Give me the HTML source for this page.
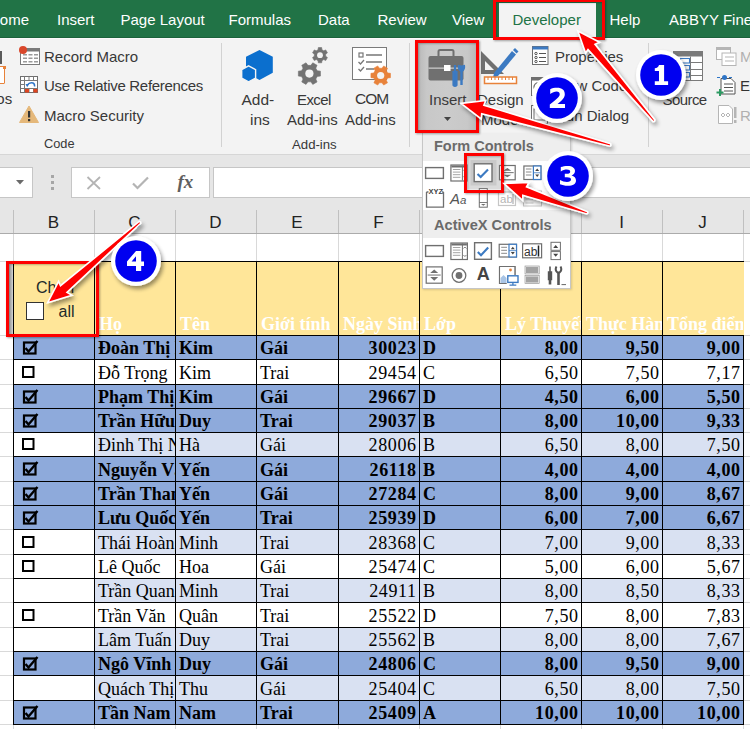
<!DOCTYPE html><html><head><meta charset="utf-8"><style>
html,body{margin:0;padding:0;width:750px;height:729px;overflow:hidden;background:#fff;position:relative}
.t{position:absolute;white-space:nowrap;line-height:1}
.b{position:absolute;box-sizing:border-box}
svg{position:absolute;overflow:visible}
</style></head><body>
<div class="b" style="left:0;top:0;width:750px;height:38px;background:#217346"></div>
<div class="t" style="left:-11.0px;top:11.6px;font-size:15px;color:#ffffff;font-weight:normal;font-family:'Liberation Sans', sans-serif;">Home</div>
<div class="t" style="left:57.0px;top:11.6px;font-size:15px;color:#ffffff;font-weight:normal;font-family:'Liberation Sans', sans-serif;">Insert</div>
<div class="t" style="left:120.5px;top:11.6px;font-size:15px;color:#ffffff;font-weight:normal;font-family:'Liberation Sans', sans-serif;">Page Layout</div>
<div class="t" style="left:228.5px;top:11.6px;font-size:15px;color:#ffffff;font-weight:normal;font-family:'Liberation Sans', sans-serif;">Formulas</div>
<div class="t" style="left:318.0px;top:11.6px;font-size:15px;color:#ffffff;font-weight:normal;font-family:'Liberation Sans', sans-serif;">Data</div>
<div class="t" style="left:377.5px;top:11.6px;font-size:15px;color:#ffffff;font-weight:normal;font-family:'Liberation Sans', sans-serif;">Review</div>
<div class="t" style="left:452.0px;top:11.6px;font-size:15px;color:#ffffff;font-weight:normal;font-family:'Liberation Sans', sans-serif;">View</div>
<div class="t" style="left:609.5px;top:11.6px;font-size:15px;color:#ffffff;font-weight:normal;font-family:'Liberation Sans', sans-serif;">Help</div>
<div class="t" style="left:669.0px;top:11.6px;font-size:15px;color:#ffffff;font-weight:normal;font-family:'Liberation Sans', sans-serif;">ABBYY FineReader</div>
<div class="b" style="left:0;top:37px;width:750px;height:1px;background:#1b623b"></div>
<div class="b" style="left:0;top:38px;width:750px;height:1px;background:#fafafa"></div>
<div class="b" style="left:499px;top:3px;width:97px;height:36px;background:#f3f3f3"></div>
<div class="t" style="left:512.5px;top:11.6px;font-size:15px;color:#217346;font-weight:normal;font-family:'Liberation Sans', sans-serif;">Developer</div>
<div class="b" style="left:0;top:39px;width:750px;height:116px;background:#f3f3f3;border-bottom:1px solid #d6d6d6"></div>
<div class="b" style="left:0;top:51px;width:1.6px;height:13px;background:#5a5a5a"></div>
<div class="b" style="left:-14px;top:66px;width:18.5px;height:17.5px;border:1.5px solid #e8823a;border-radius:1px;background:#fff"></div><div class="b" style="left:3px;top:66px;width:2.5px;height:2.5px;background:#e8823a"></div>
<div class="t" style="left:-3.7px;top:91.3px;font-size:15px;color:#383838;font-weight:normal;font-family:'Liberation Sans', sans-serif;">os</div>
<svg style="left:19px;top:46px" width="22" height="20" viewBox="0 0 22 20">
<rect x="1.5" y="2.5" width="19" height="16" fill="#fff" stroke="#7a7a7a"/>
<rect x="1.5" y="2.5" width="19" height="3" fill="#7a7a7a"/>
<g fill="#9a9a9a"><rect x="4" y="8" width="4" height="1.5"/><rect x="9.5" y="8" width="4" height="1.5"/><rect x="15" y="8" width="4" height="1.5"/>
<rect x="4" y="11.5" width="4" height="1.5"/><rect x="9.5" y="11.5" width="4" height="1.5"/><rect x="15" y="11.5" width="4" height="1.5"/>
<rect x="4" y="15" width="4" height="1.5"/><rect x="9.5" y="15" width="4" height="1.5"/><rect x="15" y="15" width="4" height="1.5"/></g>
<circle cx="4" cy="4" r="4" fill="#d9472b"/></svg>
<div class="t" style="left:44.0px;top:49.3px;font-size:15px;color:#383838;font-weight:normal;font-family:'Liberation Sans', sans-serif;">Record Macro</div>
<svg style="left:20px;top:76px" width="19" height="17" viewBox="0 0 19 17">
<rect x="0.5" y="0.5" width="17" height="16" fill="#fff" stroke="#6f6f6f"/>
<path d="M0.5 4.5H17.5M0.5 8.5H4.5M0.5 12.5H17.5M4.5 0.5V16.5M9 0.5V4.5M13.5 0.5V4.5M9 12.5V16.5M13.5 12.5V16.5" stroke="#7a7a7a" stroke-width="1"/>
<rect x="5" y="13" width="4" height="3.5" fill="#e0441f"/><rect x="13.5" y="13" width="4" height="3.5" fill="#e0441f"/>
<path d="M7 9.5 Q9.5 6 13 7 Q15 8 14.5 10.5" stroke="#2e75c7" stroke-width="1.5" fill="none"/><path d="M5.5 8 L8.8 8.2 L7.2 11.2 Z" fill="#2e75c7"/></svg>
<div class="t" style="left:44.0px;top:78.3px;font-size:15px;color:#383838;font-weight:normal;font-family:'Liberation Sans', sans-serif;letter-spacing:-0.3px">Use Relative References</div>
<svg style="left:19px;top:105px" width="20" height="18" viewBox="0 0 20 18">
<path d="M10 1 L19.5 17.5 L0.5 17.5 Z" fill="#e5b87a" stroke="#e5b87a" stroke-linejoin="round"/>
<rect x="9" y="6" width="2.2" height="6.5" fill="#333"/><rect x="9" y="14" width="2.2" height="2.2" fill="#333"/></svg>
<div class="t" style="left:44.0px;top:107.8px;font-size:15px;color:#383838;font-weight:normal;font-family:'Liberation Sans', sans-serif;">Macro Security</div>
<div class="t" style="left:44.0px;top:138.2px;font-size:12.8px;color:#383838;font-weight:normal;font-family:'Liberation Sans', sans-serif;">Code</div>
<div class="b" style="left:221px;top:43px;width:1px;height:104px;background:#d2d2d2"></div>
<svg style="left:0;top:0" width="300" height="100">
<path d="M259.5 49.9 L272.8 56.8 V72.8 L259.5 79.9 L246 72.8 V56.8 Z" fill="#0b6fce"/>
<path d="M248.6 65.8 L255.6 69.7 V78.1 L248.6 81.8 L241.7 78.1 V69.7 Z" fill="#0b6fce" stroke="#f3f3f3" stroke-width="1.4"/></svg>
<div class="t" style="left:241.5px;top:91.9px;font-size:15.5px;color:#383838;font-weight:normal;font-family:'Liberation Sans', sans-serif;">Add-</div>
<div class="t" style="left:250.0px;top:111.9px;font-size:15.5px;color:#383838;font-weight:normal;font-family:'Liberation Sans', sans-serif;">ins</div>
<svg style="left:0;top:0" width="750" height="160"><polygon points="317.27,70.77 320.43,71.13 320.43,76.07 317.27,76.43 315.79,79.00 317.05,81.92 312.78,84.38 310.88,81.83 307.92,81.83 306.02,84.38 301.75,81.92 303.01,79.00 301.53,76.43 298.37,76.07 298.37,71.13 301.53,70.77 303.01,68.20 301.75,65.28 306.02,62.82 307.92,65.37 310.88,65.37 312.78,62.82 317.05,65.28 315.79,68.20" fill="#737373" stroke="#737373" stroke-width="0.6" stroke-linejoin="round"/><circle cx="309.4" cy="73.6" r="4.1" fill="#f3f3f3"/><polygon points="325.68,56.22 327.44,57.53 325.74,60.48 323.73,59.61 321.96,60.63 321.70,62.81 318.30,62.81 318.04,60.63 316.27,59.61 314.26,60.48 312.56,57.53 314.32,56.22 314.32,54.18 312.56,52.87 314.26,49.92 316.27,50.79 318.04,49.77 318.30,47.59 321.70,47.59 321.96,49.77 323.73,50.79 325.74,49.92 327.44,52.87 325.68,54.18" fill="#737373" stroke="#737373" stroke-width="0.6" stroke-linejoin="round"/><circle cx="320" cy="55.2" r="2.9" fill="#f3f3f3"/></svg>
<div class="t" style="left:297.0px;top:92.3px;font-size:15px;color:#383838;font-weight:normal;font-family:'Liberation Sans', sans-serif;letter-spacing:-0.6px">Excel</div>
<div class="t" style="left:287.0px;top:112.3px;font-size:15px;color:#383838;font-weight:normal;font-family:'Liberation Sans', sans-serif;">Add-ins</div>
<svg style="left:352px;top:47px" width="40" height="40" viewBox="0 0 40 40">
<rect x="0.5" y="0.5" width="34" height="32" fill="#fff" stroke="#7a7a7a"/>
<rect x="7" y="6" width="4" height="4" fill="none" stroke="#777" stroke-width="1.2"/>
<path d="M14 8H30M14 15H30M14 22H22" stroke="#777" stroke-width="1.3"/>
<path d="M6.5 15 L8.5 17 L12 13 M6.5 22 L8.5 24 L12 20" stroke="#777" stroke-width="1.3" fill="none"/></svg>
<svg style="left:0;top:0" width="750" height="160"><polygon points="387.66,72.99 390.46,73.32 390.46,77.68 387.66,78.01 386.35,80.28 387.47,82.86 383.69,85.04 382.01,82.78 379.39,82.78 377.71,85.04 373.93,82.86 375.05,80.28 373.74,78.01 370.94,77.68 370.94,73.32 373.74,72.99 375.05,70.72 373.93,68.14 377.71,65.96 379.39,68.22 382.01,68.22 383.69,65.96 387.47,68.14 386.35,70.72" fill="#e8823a" stroke="#e8823a" stroke-width="0.6" stroke-linejoin="round"/><circle cx="380.7" cy="75.5" r="3.6" fill="#f3f3f3"/></svg>
<div class="t" style="left:355.0px;top:91.4px;font-size:15.5px;color:#383838;font-weight:normal;font-family:'Liberation Sans', sans-serif;letter-spacing:-1px">COM</div>
<div class="t" style="left:345.0px;top:112.3px;font-size:15px;color:#383838;font-weight:normal;font-family:'Liberation Sans', sans-serif;">Add-ins</div>
<div class="t" style="left:292.0px;top:137.8px;font-size:13.2px;color:#383838;font-weight:normal;font-family:'Liberation Sans', sans-serif;">Add-ins</div>
<div class="b" style="left:409px;top:43px;width:1px;height:104px;background:#d2d2d2"></div>
<div class="b" style="left:418px;top:43px;width:58px;height:88px;background:linear-gradient(90deg,#b9b9b9 0,#c8c8c8 15%,#cbcbcb 50%,#c8c8c8 85%,#b9b9b9 100%)"></div>
<svg style="left:428px;top:49px" width="40" height="38" viewBox="0 0 40 38">
<path d="M10.5 7 V2.5 Q10.5 1 12 1 H24 Q25.5 1 25.5 2.5 V7" fill="none" stroke="#6f6f6f" stroke-width="2"/>
<rect x="0.5" y="7" width="35" height="24.5" rx="2" fill="#707070"/>
<rect x="0.5" y="18.5" width="35" height="1.3" fill="#c9c9c9"/>
<rect x="16" y="16" width="6.5" height="6" fill="#fff"/>
<path d="M27 16 V23 M25.5 23 H28.5 V36 Q27 38 25.5 36 Z" stroke="#3c7ac2" stroke-width="2.2" fill="#3c7ac2"/>
<path d="M33 16.5 Q31.5 19 33.5 21 V36 M33.5 21 Q35.5 19 34 16.5" stroke="#3c7ac2" stroke-width="2.4" fill="none"/>
<path d="M31 16 Q30 21 33.5 22 Q37 21 36 16" stroke="#3c7ac2" stroke-width="2" fill="none"/></svg>
<div class="t" style="left:429.0px;top:91.5px;font-size:15px;color:#3a3a3a;font-weight:normal;font-family:'Liberation Sans', sans-serif;">Insert</div>
<svg style="left:444px;top:117px" width="8" height="5"><path d="M0 0H7L3.5 4Z" fill="#444"/></svg>
<svg style="left:480px;top:47px" width="40" height="38" viewBox="0 0 40 38">
<path d="M1 4 L24 27 H1 Z" fill="#6f6f6f"/><path d="M5 14 L14 23 H5 Z" fill="#f3f3f3"/>
<path d="M14 26 L32 4 L36 7.5 L18 29 L13 31 Z" fill="#3c7ac2"/><path d="M33 3 L35 1 L38.5 4.5 L36.5 6.5 Z" fill="#3c7ac2"/>
<rect x="4.5" y="30" width="32" height="6.5" fill="#fff" stroke="#e8823a" stroke-width="1.5"/>
<path d="M8 30v3M11.5 30v3M15 30v3M18.5 30v3M22 30v3M25.5 30v3M29 30v3M32.5 30v3" stroke="#e8823a" stroke-width="1"/></svg>
<div class="t" style="left:477.0px;top:91.7px;font-size:15px;color:#383838;font-weight:normal;font-family:'Liberation Sans', sans-serif;">Design</div>
<div class="t" style="left:481.0px;top:111.8px;font-size:15px;color:#383838;font-weight:normal;font-family:'Liberation Sans', sans-serif;">Mode</div>
<svg style="left:532px;top:46px" width="17" height="19" viewBox="0 0 17 19">
<rect x="0.5" y="0.5" width="15.5" height="18" fill="#fff" stroke="#6f6f6f"/><rect x="0.5" y="0.5" width="15.5" height="3" fill="#3c7ac2"/>
<circle cx="4" cy="7.5" r="1.2" fill="none" stroke="#555"/><circle cx="4" cy="11.5" r="1.2" fill="none" stroke="#555"/><circle cx="4" cy="15.5" r="1.2" fill="none" stroke="#555"/>
<path d="M7 7.5H14M7 11.5H14M7 15.5H14" stroke="#555" stroke-width="1.2"/></svg>
<div class="t" style="left:555.0px;top:49.3px;font-size:15px;color:#383838;font-weight:normal;font-family:'Liberation Sans', sans-serif;">Properties</div>
<svg style="left:531px;top:77px" width="18" height="19" viewBox="0 0 18 19">
<rect x="0.5" y="0.5" width="16" height="18" fill="#fff" stroke="#6f6f6f"/><rect x="0.5" y="0.5" width="16" height="3" fill="#6f6f6f"/>
<circle cx="7" cy="10" r="4" fill="none" stroke="#6f6f6f" stroke-width="1.3"/></svg>
<div class="t" style="left:555.0px;top:78.3px;font-size:15px;color:#383838;font-weight:normal;font-family:'Liberation Sans', sans-serif;">View Code</div>
<svg style="left:531px;top:105px" width="18" height="19" viewBox="0 0 18 19">
<rect x="0.5" y="0.5" width="16" height="18" fill="#fff" stroke="#6f6f6f"/><rect x="3" y="4" width="11" height="11" fill="none" stroke="#6f6f6f"/></svg>
<div class="t" style="left:555.0px;top:107.6px;font-size:15px;color:#383838;font-weight:normal;font-family:'Liberation Sans', sans-serif;">Run Dialog</div>
<div class="b" style="left:648px;top:43px;width:1px;height:104px;background:#d2d2d2"></div>
<svg style="left:672.5px;top:50.5px" width="31" height="31" viewBox="0 0 31 31">
<rect x="0.5" y="0.5" width="29" height="29" fill="#fff" stroke="#7a7a7a"/><rect x="0.5" y="0.5" width="29" height="5" fill="#7a7a7a"/>
<path d="M17.5 11.5H29.5M17.5 18.5H29.5M17.5 24.5H29.5M17.5 5.5V29.5" stroke="#7a7a7a" stroke-width="1"/>
<rect x="7.5" y="7.5" width="9" height="4.5" fill="none" stroke="#3c7ac2" stroke-width="1.1"/><rect x="7.5" y="14.5" width="9" height="4.5" fill="none" stroke="#3c7ac2" stroke-width="1.1"/><rect x="7.5" y="21.5" width="9" height="4.5" fill="none" stroke="#3c7ac2" stroke-width="1.1"/></svg>
<div class="t" style="left:662.6px;top:91.6px;font-size:15px;color:#383838;font-weight:normal;font-family:'Liberation Sans', sans-serif;letter-spacing:-0.6px">Source</div>
<svg style="left:716px;top:47px" width="21" height="19" viewBox="0 0 21 19">
<rect x="0.5" y="0.5" width="14" height="12" fill="#fff" stroke="#b5b5b5"/><rect x="0.5" y="0.5" width="14" height="2.5" fill="#b5b5b5"/>
<rect x="6" y="6" width="14" height="12.5" fill="#fff" stroke="#b5b5b5"/><path d="M9 10h9M9 14h9" stroke="#b5b5b5"/></svg>
<div class="t" style="left:740.0px;top:49.3px;font-size:15px;color:#b0b0b0;font-weight:normal;font-family:'Liberation Sans', sans-serif;">Map Properties</div>
<svg style="left:716px;top:75px" width="21" height="21" viewBox="0 0 21 21">
<path d="M5 3.5H15L19 7.5V19H5Z" fill="#fff" stroke="#555"/><path d="M8 9h9M8 12.5h9M8 16h9" stroke="#555"/>
<path d="M1 2.5h3M13 2.5h3" stroke="#2e75c7" stroke-width="1.2"/><circle cx="8.5" cy="2.5" r="2.5" fill="#2e75c7"/>
<path d="M4 14V21M0.5 17.5H7.5" stroke="#2c9a62" stroke-width="2"/></svg>
<div class="t" style="left:740.0px;top:78.3px;font-size:15px;color:#333;font-weight:normal;font-family:'Liberation Sans', sans-serif;">Expansion Packs</div>
<svg style="left:718px;top:105px" width="19" height="19" viewBox="0 0 19 19">
<path d="M0.5 0.5H11L14.5 4V18.5H0.5Z" fill="#fff" stroke="#b5b5b5"/><path d="M3 10 L5 8 L7 10 L5 12Z M8 10 L10 8 L12 10 L10 12Z" fill="none" stroke="#b5b5b5"/>
<rect x="16" y="2" width="2.5" height="11" fill="#b5b5b5"/><rect x="16" y="15" width="2.5" height="3" fill="#b5b5b5"/></svg>
<div class="t" style="left:740.0px;top:107.6px;font-size:15px;color:#b0b0b0;font-weight:normal;font-family:'Liberation Sans', sans-serif;">Refresh Data</div>
<div class="b" style="left:0;top:155px;width:750px;height:55px;background:#e6e6e6"></div>
<div class="b" style="left:-10px;top:167px;width:43px;height:31px;background:#fff;border:1px solid #c6c6c6"></div>
<svg style="left:16px;top:180px" width="9" height="5"><path d="M0 0H8L4 4.5Z" fill="#6a6a6a"/></svg>
<div class="b" style="left:51px;top:175px;width:3px;height:3px;background:#a6a6a6"></div>
<div class="b" style="left:51px;top:181px;width:3px;height:3px;background:#a6a6a6"></div>
<div class="b" style="left:51px;top:187px;width:3px;height:3px;background:#a6a6a6"></div>
<div class="b" style="left:71px;top:167px;width:139px;height:31px;background:#fff;border:1px solid #c6c6c6"></div>
<svg style="left:86px;top:176px" width="16" height="14"><path d="M1.5 1L14 13M14 1L1.5 13" stroke="#b4b4b4" stroke-width="1.8"/></svg>
<svg style="left:132px;top:176px" width="17" height="14"><path d="M1 7.5L5.5 12L16 1.5" stroke="#b4b4b4" stroke-width="2.2" fill="none"/></svg>
<div class="t" style="left:177.5px;top:171.6px;font-size:19px;color:#5f5f5f;font-weight:bold;font-family:'Liberation Serif', serif;"><i>fx</i></div>
<div class="b" style="left:213px;top:167px;width:550px;height:31px;background:#fff;border:1px solid #c6c6c6"></div>
<div class="b" style="left:0;top:210px;width:750px;height:24px;background:#e6e6e6;border-bottom:1px solid #ababab"></div>
<div class="b" style="left:13px;top:210px;width:1px;height:23px;background:#c0c0c0"></div>
<div class="b" style="left:94px;top:210px;width:1px;height:23px;background:#c0c0c0"></div>
<div class="b" style="left:175px;top:210px;width:1px;height:23px;background:#c0c0c0"></div>
<div class="b" style="left:256px;top:210px;width:1px;height:23px;background:#c0c0c0"></div>
<div class="b" style="left:338px;top:210px;width:1px;height:23px;background:#c0c0c0"></div>
<div class="b" style="left:419px;top:210px;width:1px;height:23px;background:#c0c0c0"></div>
<div class="b" style="left:500px;top:210px;width:1px;height:23px;background:#c0c0c0"></div>
<div class="b" style="left:581px;top:210px;width:1px;height:23px;background:#c0c0c0"></div>
<div class="b" style="left:662px;top:210px;width:1px;height:23px;background:#c0c0c0"></div>
<div class="b" style="left:743px;top:210px;width:1px;height:23px;background:#c0c0c0"></div>
<div class="t" style="left:13px;width:81px;text-align:center;top:213.6px;font-size:17px;color:#222;font-family:'Liberation Sans', sans-serif">B</div>
<div class="t" style="left:94px;width:81px;text-align:center;top:213.6px;font-size:17px;color:#222;font-family:'Liberation Sans', sans-serif">C</div>
<div class="t" style="left:175px;width:81px;text-align:center;top:213.6px;font-size:17px;color:#222;font-family:'Liberation Sans', sans-serif">D</div>
<div class="t" style="left:256px;width:82px;text-align:center;top:213.6px;font-size:17px;color:#222;font-family:'Liberation Sans', sans-serif">E</div>
<div class="t" style="left:338px;width:81px;text-align:center;top:213.6px;font-size:17px;color:#222;font-family:'Liberation Sans', sans-serif">F</div>
<div class="t" style="left:419px;width:81px;text-align:center;top:213.6px;font-size:17px;color:#222;font-family:'Liberation Sans', sans-serif">G</div>
<div class="t" style="left:500px;width:81px;text-align:center;top:213.6px;font-size:17px;color:#222;font-family:'Liberation Sans', sans-serif">H</div>
<div class="t" style="left:581px;width:81px;text-align:center;top:213.6px;font-size:17px;color:#222;font-family:'Liberation Sans', sans-serif">I</div>
<div class="t" style="left:662px;width:81px;text-align:center;top:213.6px;font-size:17px;color:#222;font-family:'Liberation Sans', sans-serif">J</div>
<div class="b" style="left:0;top:261px;width:750px;height:1px;background:#d9d9d9"></div>
<div class="b" style="left:0;top:335px;width:750px;height:1px;background:#d9d9d9"></div>
<div class="b" style="left:0;top:359px;width:750px;height:1px;background:#d9d9d9"></div>
<div class="b" style="left:0;top:384px;width:750px;height:1px;background:#d9d9d9"></div>
<div class="b" style="left:0;top:408px;width:750px;height:1px;background:#d9d9d9"></div>
<div class="b" style="left:0;top:432px;width:750px;height:1px;background:#d9d9d9"></div>
<div class="b" style="left:0;top:456px;width:750px;height:1px;background:#d9d9d9"></div>
<div class="b" style="left:0;top:481px;width:750px;height:1px;background:#d9d9d9"></div>
<div class="b" style="left:0;top:505px;width:750px;height:1px;background:#d9d9d9"></div>
<div class="b" style="left:0;top:529px;width:750px;height:1px;background:#d9d9d9"></div>
<div class="b" style="left:0;top:554px;width:750px;height:1px;background:#d9d9d9"></div>
<div class="b" style="left:0;top:578px;width:750px;height:1px;background:#d9d9d9"></div>
<div class="b" style="left:0;top:602px;width:750px;height:1px;background:#d9d9d9"></div>
<div class="b" style="left:0;top:627px;width:750px;height:1px;background:#d9d9d9"></div>
<div class="b" style="left:0;top:651px;width:750px;height:1px;background:#d9d9d9"></div>
<div class="b" style="left:0;top:675px;width:750px;height:1px;background:#d9d9d9"></div>
<div class="b" style="left:0;top:700px;width:750px;height:1px;background:#d9d9d9"></div>
<div class="b" style="left:0;top:724px;width:750px;height:1px;background:#d9d9d9"></div>
<div class="b" style="left:13px;top:234px;width:1px;height:495px;background:#d9d9d9"></div>
<div class="b" style="left:94px;top:234px;width:1px;height:495px;background:#d9d9d9"></div>
<div class="b" style="left:175px;top:234px;width:1px;height:495px;background:#d9d9d9"></div>
<div class="b" style="left:256px;top:234px;width:1px;height:495px;background:#d9d9d9"></div>
<div class="b" style="left:338px;top:234px;width:1px;height:495px;background:#d9d9d9"></div>
<div class="b" style="left:419px;top:234px;width:1px;height:495px;background:#d9d9d9"></div>
<div class="b" style="left:500px;top:234px;width:1px;height:495px;background:#d9d9d9"></div>
<div class="b" style="left:581px;top:234px;width:1px;height:495px;background:#d9d9d9"></div>
<div class="b" style="left:662px;top:234px;width:1px;height:495px;background:#d9d9d9"></div>
<div class="b" style="left:743px;top:234px;width:1px;height:495px;background:#d9d9d9"></div>
<div class="b" style="left:13px;top:261px;width:731px;height:74px;background:#ffe699"></div>
<div class="b" style="left:13px;top:335px;width:731px;height:24px;background:#8eaadb"></div>
<div class="t" style="left:95px;top:335px;width:80px;height:24px;overflow:hidden"><span class="t" style="left:3px;top:3.9px;font-size:18px;font-weight:bold;font-family:'Liberation Serif', serif;color:#000">Đoàn Thị Kim</span></div>
<div class="t" style="left:176px;top:335px;width:80px;height:24px;overflow:hidden"><span class="t" style="left:3px;top:3.9px;font-size:18px;font-weight:bold;font-family:'Liberation Serif', serif;color:#000">Kim</span></div>
<div class="t" style="left:257px;top:335px;width:81px;height:24px;overflow:hidden"><span class="t" style="left:3px;top:3.9px;font-size:18px;font-weight:bold;font-family:'Liberation Serif', serif;color:#000">Gái</span></div>
<div class="t" style="left:339px;top:335px;width:80px;height:24px;overflow:hidden"><span class="t" style="right:3px;top:3.9px;font-size:18px;letter-spacing:0.6px;margin-right:-0.6px;font-weight:bold;font-family:'Liberation Serif', serif;color:#000">30023</span></div>
<div class="t" style="left:420px;top:335px;width:80px;height:24px;overflow:hidden"><span class="t" style="left:3px;top:3.9px;font-size:18px;font-weight:bold;font-family:'Liberation Serif', serif;color:#000">D</span></div>
<div class="t" style="left:501px;top:335px;width:80px;height:24px;overflow:hidden"><span class="t" style="right:3px;top:3.9px;font-size:18px;letter-spacing:0.6px;margin-right:-0.6px;font-weight:bold;font-family:'Liberation Serif', serif;color:#000">8,00</span></div>
<div class="t" style="left:582px;top:335px;width:80px;height:24px;overflow:hidden"><span class="t" style="right:3px;top:3.9px;font-size:18px;letter-spacing:0.6px;margin-right:-0.6px;font-weight:bold;font-family:'Liberation Serif', serif;color:#000">9,50</span></div>
<div class="t" style="left:663px;top:335px;width:80px;height:24px;overflow:hidden"><span class="t" style="right:3px;top:3.9px;font-size:18px;letter-spacing:0.6px;margin-right:-0.6px;font-weight:bold;font-family:'Liberation Serif', serif;color:#000">9,00</span></div>
<svg style="left:22px;top:339.5px" width="17" height="15" viewBox="0 0 17 15"><rect x="2" y="2.5" width="11.5" height="11" fill="none" stroke="#000" stroke-width="2.2"/><path d="M3.5 8 L6.5 11.5 L15.5 1" stroke="#000" stroke-width="2.4" fill="none"/></svg>
<div class="b" style="left:13px;top:359px;width:731px;height:25px;background:#fff"></div>
<div class="t" style="left:95px;top:359px;width:80px;height:25px;overflow:hidden"><span class="t" style="left:3px;top:4.9px;font-size:18px;font-weight:normal;font-family:'Liberation Serif', serif;color:#000">Đỗ Trọng</span></div>
<div class="t" style="left:176px;top:359px;width:80px;height:25px;overflow:hidden"><span class="t" style="left:3px;top:4.9px;font-size:18px;font-weight:normal;font-family:'Liberation Serif', serif;color:#000">Kim</span></div>
<div class="t" style="left:257px;top:359px;width:81px;height:25px;overflow:hidden"><span class="t" style="left:3px;top:4.9px;font-size:18px;font-weight:normal;font-family:'Liberation Serif', serif;color:#000">Trai</span></div>
<div class="t" style="left:339px;top:359px;width:80px;height:25px;overflow:hidden"><span class="t" style="right:3px;top:4.9px;font-size:18px;letter-spacing:0.6px;margin-right:-0.6px;font-weight:normal;font-family:'Liberation Serif', serif;color:#000">29454</span></div>
<div class="t" style="left:420px;top:359px;width:80px;height:25px;overflow:hidden"><span class="t" style="left:3px;top:4.9px;font-size:18px;font-weight:normal;font-family:'Liberation Serif', serif;color:#000">C</span></div>
<div class="t" style="left:501px;top:359px;width:80px;height:25px;overflow:hidden"><span class="t" style="right:3px;top:4.9px;font-size:18px;letter-spacing:0.6px;margin-right:-0.6px;font-weight:normal;font-family:'Liberation Serif', serif;color:#000">6,50</span></div>
<div class="t" style="left:582px;top:359px;width:80px;height:25px;overflow:hidden"><span class="t" style="right:3px;top:4.9px;font-size:18px;letter-spacing:0.6px;margin-right:-0.6px;font-weight:normal;font-family:'Liberation Serif', serif;color:#000">7,50</span></div>
<div class="t" style="left:663px;top:359px;width:80px;height:25px;overflow:hidden"><span class="t" style="right:3px;top:4.9px;font-size:18px;letter-spacing:0.6px;margin-right:-0.6px;font-weight:normal;font-family:'Liberation Serif', serif;color:#000">7,17</span></div>
<svg style="left:21px;top:364.5px" width="15" height="14" viewBox="0 0 15 14"><rect x="2" y="2" width="10.5" height="10" fill="none" stroke="#000" stroke-width="2"/></svg>
<div class="b" style="left:13px;top:384px;width:731px;height:24px;background:#8eaadb"></div>
<div class="t" style="left:95px;top:384px;width:80px;height:24px;overflow:hidden"><span class="t" style="left:3px;top:3.9px;font-size:18px;font-weight:bold;font-family:'Liberation Serif', serif;color:#000">Phạm Thị Kim</span></div>
<div class="t" style="left:176px;top:384px;width:80px;height:24px;overflow:hidden"><span class="t" style="left:3px;top:3.9px;font-size:18px;font-weight:bold;font-family:'Liberation Serif', serif;color:#000">Kim</span></div>
<div class="t" style="left:257px;top:384px;width:81px;height:24px;overflow:hidden"><span class="t" style="left:3px;top:3.9px;font-size:18px;font-weight:bold;font-family:'Liberation Serif', serif;color:#000">Gái</span></div>
<div class="t" style="left:339px;top:384px;width:80px;height:24px;overflow:hidden"><span class="t" style="right:3px;top:3.9px;font-size:18px;letter-spacing:0.6px;margin-right:-0.6px;font-weight:bold;font-family:'Liberation Serif', serif;color:#000">29667</span></div>
<div class="t" style="left:420px;top:384px;width:80px;height:24px;overflow:hidden"><span class="t" style="left:3px;top:3.9px;font-size:18px;font-weight:bold;font-family:'Liberation Serif', serif;color:#000">D</span></div>
<div class="t" style="left:501px;top:384px;width:80px;height:24px;overflow:hidden"><span class="t" style="right:3px;top:3.9px;font-size:18px;letter-spacing:0.6px;margin-right:-0.6px;font-weight:bold;font-family:'Liberation Serif', serif;color:#000">4,50</span></div>
<div class="t" style="left:582px;top:384px;width:80px;height:24px;overflow:hidden"><span class="t" style="right:3px;top:3.9px;font-size:18px;letter-spacing:0.6px;margin-right:-0.6px;font-weight:bold;font-family:'Liberation Serif', serif;color:#000">6,00</span></div>
<div class="t" style="left:663px;top:384px;width:80px;height:24px;overflow:hidden"><span class="t" style="right:3px;top:3.9px;font-size:18px;letter-spacing:0.6px;margin-right:-0.6px;font-weight:bold;font-family:'Liberation Serif', serif;color:#000">5,50</span></div>
<svg style="left:22px;top:388.5px" width="17" height="15" viewBox="0 0 17 15"><rect x="2" y="2.5" width="11.5" height="11" fill="none" stroke="#000" stroke-width="2.2"/><path d="M3.5 8 L6.5 11.5 L15.5 1" stroke="#000" stroke-width="2.4" fill="none"/></svg>
<div class="b" style="left:13px;top:408px;width:731px;height:24px;background:#8eaadb"></div>
<div class="t" style="left:95px;top:408px;width:80px;height:24px;overflow:hidden"><span class="t" style="left:3px;top:3.9px;font-size:18px;font-weight:bold;font-family:'Liberation Serif', serif;color:#000">Trần Hữu Duy</span></div>
<div class="t" style="left:176px;top:408px;width:80px;height:24px;overflow:hidden"><span class="t" style="left:3px;top:3.9px;font-size:18px;font-weight:bold;font-family:'Liberation Serif', serif;color:#000">Duy</span></div>
<div class="t" style="left:257px;top:408px;width:81px;height:24px;overflow:hidden"><span class="t" style="left:3px;top:3.9px;font-size:18px;font-weight:bold;font-family:'Liberation Serif', serif;color:#000">Trai</span></div>
<div class="t" style="left:339px;top:408px;width:80px;height:24px;overflow:hidden"><span class="t" style="right:3px;top:3.9px;font-size:18px;letter-spacing:0.6px;margin-right:-0.6px;font-weight:bold;font-family:'Liberation Serif', serif;color:#000">29037</span></div>
<div class="t" style="left:420px;top:408px;width:80px;height:24px;overflow:hidden"><span class="t" style="left:3px;top:3.9px;font-size:18px;font-weight:bold;font-family:'Liberation Serif', serif;color:#000">B</span></div>
<div class="t" style="left:501px;top:408px;width:80px;height:24px;overflow:hidden"><span class="t" style="right:3px;top:3.9px;font-size:18px;letter-spacing:0.6px;margin-right:-0.6px;font-weight:bold;font-family:'Liberation Serif', serif;color:#000">8,00</span></div>
<div class="t" style="left:582px;top:408px;width:80px;height:24px;overflow:hidden"><span class="t" style="right:3px;top:3.9px;font-size:18px;letter-spacing:0.6px;margin-right:-0.6px;font-weight:bold;font-family:'Liberation Serif', serif;color:#000">10,00</span></div>
<div class="t" style="left:663px;top:408px;width:80px;height:24px;overflow:hidden"><span class="t" style="right:3px;top:3.9px;font-size:18px;letter-spacing:0.6px;margin-right:-0.6px;font-weight:bold;font-family:'Liberation Serif', serif;color:#000">9,33</span></div>
<svg style="left:22px;top:412.5px" width="17" height="15" viewBox="0 0 17 15"><rect x="2" y="2.5" width="11.5" height="11" fill="none" stroke="#000" stroke-width="2.2"/><path d="M3.5 8 L6.5 11.5 L15.5 1" stroke="#000" stroke-width="2.4" fill="none"/></svg>
<div class="b" style="left:13px;top:432px;width:731px;height:24px;background:#fff"></div>
<div class="b" style="left:94px;top:432px;width:650px;height:24px;background:#d9e1f2"></div>
<div class="t" style="left:95px;top:432px;width:80px;height:24px;overflow:hidden"><span class="t" style="left:3px;top:3.9px;font-size:18px;font-weight:normal;font-family:'Liberation Serif', serif;color:#000">Đinh Thị Như</span></div>
<div class="t" style="left:176px;top:432px;width:80px;height:24px;overflow:hidden"><span class="t" style="left:3px;top:3.9px;font-size:18px;font-weight:normal;font-family:'Liberation Serif', serif;color:#000">Hà</span></div>
<div class="t" style="left:257px;top:432px;width:81px;height:24px;overflow:hidden"><span class="t" style="left:3px;top:3.9px;font-size:18px;font-weight:normal;font-family:'Liberation Serif', serif;color:#000">Gái</span></div>
<div class="t" style="left:339px;top:432px;width:80px;height:24px;overflow:hidden"><span class="t" style="right:3px;top:3.9px;font-size:18px;letter-spacing:0.6px;margin-right:-0.6px;font-weight:normal;font-family:'Liberation Serif', serif;color:#000">28006</span></div>
<div class="t" style="left:420px;top:432px;width:80px;height:24px;overflow:hidden"><span class="t" style="left:3px;top:3.9px;font-size:18px;font-weight:normal;font-family:'Liberation Serif', serif;color:#000">B</span></div>
<div class="t" style="left:501px;top:432px;width:80px;height:24px;overflow:hidden"><span class="t" style="right:3px;top:3.9px;font-size:18px;letter-spacing:0.6px;margin-right:-0.6px;font-weight:normal;font-family:'Liberation Serif', serif;color:#000">6,50</span></div>
<div class="t" style="left:582px;top:432px;width:80px;height:24px;overflow:hidden"><span class="t" style="right:3px;top:3.9px;font-size:18px;letter-spacing:0.6px;margin-right:-0.6px;font-weight:normal;font-family:'Liberation Serif', serif;color:#000">8,00</span></div>
<div class="t" style="left:663px;top:432px;width:80px;height:24px;overflow:hidden"><span class="t" style="right:3px;top:3.9px;font-size:18px;letter-spacing:0.6px;margin-right:-0.6px;font-weight:normal;font-family:'Liberation Serif', serif;color:#000">7,50</span></div>
<svg style="left:21px;top:437.0px" width="15" height="14" viewBox="0 0 15 14"><rect x="2" y="2" width="10.5" height="10" fill="none" stroke="#000" stroke-width="2"/></svg>
<div class="b" style="left:13px;top:456px;width:731px;height:25px;background:#8eaadb"></div>
<div class="t" style="left:95px;top:456px;width:80px;height:25px;overflow:hidden"><span class="t" style="left:3px;top:4.9px;font-size:18px;font-weight:bold;font-family:'Liberation Serif', serif;color:#000">Nguyễn Văn</span></div>
<div class="t" style="left:176px;top:456px;width:80px;height:25px;overflow:hidden"><span class="t" style="left:3px;top:4.9px;font-size:18px;font-weight:bold;font-family:'Liberation Serif', serif;color:#000">Yến</span></div>
<div class="t" style="left:257px;top:456px;width:81px;height:25px;overflow:hidden"><span class="t" style="left:3px;top:4.9px;font-size:18px;font-weight:bold;font-family:'Liberation Serif', serif;color:#000">Gái</span></div>
<div class="t" style="left:339px;top:456px;width:80px;height:25px;overflow:hidden"><span class="t" style="right:3px;top:4.9px;font-size:18px;letter-spacing:0.6px;margin-right:-0.6px;font-weight:bold;font-family:'Liberation Serif', serif;color:#000">26118</span></div>
<div class="t" style="left:420px;top:456px;width:80px;height:25px;overflow:hidden"><span class="t" style="left:3px;top:4.9px;font-size:18px;font-weight:bold;font-family:'Liberation Serif', serif;color:#000">B</span></div>
<div class="t" style="left:501px;top:456px;width:80px;height:25px;overflow:hidden"><span class="t" style="right:3px;top:4.9px;font-size:18px;letter-spacing:0.6px;margin-right:-0.6px;font-weight:bold;font-family:'Liberation Serif', serif;color:#000">4,00</span></div>
<div class="t" style="left:582px;top:456px;width:80px;height:25px;overflow:hidden"><span class="t" style="right:3px;top:4.9px;font-size:18px;letter-spacing:0.6px;margin-right:-0.6px;font-weight:bold;font-family:'Liberation Serif', serif;color:#000">4,00</span></div>
<div class="t" style="left:663px;top:456px;width:80px;height:25px;overflow:hidden"><span class="t" style="right:3px;top:4.9px;font-size:18px;letter-spacing:0.6px;margin-right:-0.6px;font-weight:bold;font-family:'Liberation Serif', serif;color:#000">4,00</span></div>
<svg style="left:22px;top:461.0px" width="17" height="15" viewBox="0 0 17 15"><rect x="2" y="2.5" width="11.5" height="11" fill="none" stroke="#000" stroke-width="2.2"/><path d="M3.5 8 L6.5 11.5 L15.5 1" stroke="#000" stroke-width="2.4" fill="none"/></svg>
<div class="b" style="left:13px;top:481px;width:731px;height:24px;background:#8eaadb"></div>
<div class="t" style="left:95px;top:481px;width:80px;height:24px;overflow:hidden"><span class="t" style="left:3px;top:3.9px;font-size:18px;font-weight:bold;font-family:'Liberation Serif', serif;color:#000">Trần Thanh</span></div>
<div class="t" style="left:176px;top:481px;width:80px;height:24px;overflow:hidden"><span class="t" style="left:3px;top:3.9px;font-size:18px;font-weight:bold;font-family:'Liberation Serif', serif;color:#000">Yến</span></div>
<div class="t" style="left:257px;top:481px;width:81px;height:24px;overflow:hidden"><span class="t" style="left:3px;top:3.9px;font-size:18px;font-weight:bold;font-family:'Liberation Serif', serif;color:#000">Gái</span></div>
<div class="t" style="left:339px;top:481px;width:80px;height:24px;overflow:hidden"><span class="t" style="right:3px;top:3.9px;font-size:18px;letter-spacing:0.6px;margin-right:-0.6px;font-weight:bold;font-family:'Liberation Serif', serif;color:#000">27284</span></div>
<div class="t" style="left:420px;top:481px;width:80px;height:24px;overflow:hidden"><span class="t" style="left:3px;top:3.9px;font-size:18px;font-weight:bold;font-family:'Liberation Serif', serif;color:#000">C</span></div>
<div class="t" style="left:501px;top:481px;width:80px;height:24px;overflow:hidden"><span class="t" style="right:3px;top:3.9px;font-size:18px;letter-spacing:0.6px;margin-right:-0.6px;font-weight:bold;font-family:'Liberation Serif', serif;color:#000">8,00</span></div>
<div class="t" style="left:582px;top:481px;width:80px;height:24px;overflow:hidden"><span class="t" style="right:3px;top:3.9px;font-size:18px;letter-spacing:0.6px;margin-right:-0.6px;font-weight:bold;font-family:'Liberation Serif', serif;color:#000">9,00</span></div>
<div class="t" style="left:663px;top:481px;width:80px;height:24px;overflow:hidden"><span class="t" style="right:3px;top:3.9px;font-size:18px;letter-spacing:0.6px;margin-right:-0.6px;font-weight:bold;font-family:'Liberation Serif', serif;color:#000">8,67</span></div>
<svg style="left:22px;top:485.5px" width="17" height="15" viewBox="0 0 17 15"><rect x="2" y="2.5" width="11.5" height="11" fill="none" stroke="#000" stroke-width="2.2"/><path d="M3.5 8 L6.5 11.5 L15.5 1" stroke="#000" stroke-width="2.4" fill="none"/></svg>
<div class="b" style="left:13px;top:505px;width:731px;height:24px;background:#8eaadb"></div>
<div class="t" style="left:95px;top:505px;width:80px;height:24px;overflow:hidden"><span class="t" style="left:3px;top:3.9px;font-size:18px;font-weight:bold;font-family:'Liberation Serif', serif;color:#000">Lưu Quốc Yến</span></div>
<div class="t" style="left:176px;top:505px;width:80px;height:24px;overflow:hidden"><span class="t" style="left:3px;top:3.9px;font-size:18px;font-weight:bold;font-family:'Liberation Serif', serif;color:#000">Yến</span></div>
<div class="t" style="left:257px;top:505px;width:81px;height:24px;overflow:hidden"><span class="t" style="left:3px;top:3.9px;font-size:18px;font-weight:bold;font-family:'Liberation Serif', serif;color:#000">Trai</span></div>
<div class="t" style="left:339px;top:505px;width:80px;height:24px;overflow:hidden"><span class="t" style="right:3px;top:3.9px;font-size:18px;letter-spacing:0.6px;margin-right:-0.6px;font-weight:bold;font-family:'Liberation Serif', serif;color:#000">25939</span></div>
<div class="t" style="left:420px;top:505px;width:80px;height:24px;overflow:hidden"><span class="t" style="left:3px;top:3.9px;font-size:18px;font-weight:bold;font-family:'Liberation Serif', serif;color:#000">D</span></div>
<div class="t" style="left:501px;top:505px;width:80px;height:24px;overflow:hidden"><span class="t" style="right:3px;top:3.9px;font-size:18px;letter-spacing:0.6px;margin-right:-0.6px;font-weight:bold;font-family:'Liberation Serif', serif;color:#000">6,00</span></div>
<div class="t" style="left:582px;top:505px;width:80px;height:24px;overflow:hidden"><span class="t" style="right:3px;top:3.9px;font-size:18px;letter-spacing:0.6px;margin-right:-0.6px;font-weight:bold;font-family:'Liberation Serif', serif;color:#000">7,00</span></div>
<div class="t" style="left:663px;top:505px;width:80px;height:24px;overflow:hidden"><span class="t" style="right:3px;top:3.9px;font-size:18px;letter-spacing:0.6px;margin-right:-0.6px;font-weight:bold;font-family:'Liberation Serif', serif;color:#000">6,67</span></div>
<svg style="left:22px;top:509.5px" width="17" height="15" viewBox="0 0 17 15"><rect x="2" y="2.5" width="11.5" height="11" fill="none" stroke="#000" stroke-width="2.2"/><path d="M3.5 8 L6.5 11.5 L15.5 1" stroke="#000" stroke-width="2.4" fill="none"/></svg>
<div class="b" style="left:13px;top:529px;width:731px;height:25px;background:#fff"></div>
<div class="b" style="left:94px;top:529px;width:650px;height:25px;background:#d9e1f2"></div>
<div class="t" style="left:95px;top:529px;width:80px;height:25px;overflow:hidden"><span class="t" style="left:3px;top:4.9px;font-size:18px;font-weight:normal;font-family:'Liberation Serif', serif;color:#000">Thái Hoàng</span></div>
<div class="t" style="left:176px;top:529px;width:80px;height:25px;overflow:hidden"><span class="t" style="left:3px;top:4.9px;font-size:18px;font-weight:normal;font-family:'Liberation Serif', serif;color:#000">Minh</span></div>
<div class="t" style="left:257px;top:529px;width:81px;height:25px;overflow:hidden"><span class="t" style="left:3px;top:4.9px;font-size:18px;font-weight:normal;font-family:'Liberation Serif', serif;color:#000">Trai</span></div>
<div class="t" style="left:339px;top:529px;width:80px;height:25px;overflow:hidden"><span class="t" style="right:3px;top:4.9px;font-size:18px;letter-spacing:0.6px;margin-right:-0.6px;font-weight:normal;font-family:'Liberation Serif', serif;color:#000">28368</span></div>
<div class="t" style="left:420px;top:529px;width:80px;height:25px;overflow:hidden"><span class="t" style="left:3px;top:4.9px;font-size:18px;font-weight:normal;font-family:'Liberation Serif', serif;color:#000">C</span></div>
<div class="t" style="left:501px;top:529px;width:80px;height:25px;overflow:hidden"><span class="t" style="right:3px;top:4.9px;font-size:18px;letter-spacing:0.6px;margin-right:-0.6px;font-weight:normal;font-family:'Liberation Serif', serif;color:#000">7,00</span></div>
<div class="t" style="left:582px;top:529px;width:80px;height:25px;overflow:hidden"><span class="t" style="right:3px;top:4.9px;font-size:18px;letter-spacing:0.6px;margin-right:-0.6px;font-weight:normal;font-family:'Liberation Serif', serif;color:#000">9,00</span></div>
<div class="t" style="left:663px;top:529px;width:80px;height:25px;overflow:hidden"><span class="t" style="right:3px;top:4.9px;font-size:18px;letter-spacing:0.6px;margin-right:-0.6px;font-weight:normal;font-family:'Liberation Serif', serif;color:#000">8,33</span></div>
<svg style="left:21px;top:534.5px" width="15" height="14" viewBox="0 0 15 14"><rect x="2" y="2" width="10.5" height="10" fill="none" stroke="#000" stroke-width="2"/></svg>
<div class="b" style="left:13px;top:554px;width:731px;height:24px;background:#fff"></div>
<div class="t" style="left:95px;top:554px;width:80px;height:24px;overflow:hidden"><span class="t" style="left:3px;top:3.9px;font-size:18px;font-weight:normal;font-family:'Liberation Serif', serif;color:#000">Lê Quốc</span></div>
<div class="t" style="left:176px;top:554px;width:80px;height:24px;overflow:hidden"><span class="t" style="left:3px;top:3.9px;font-size:18px;font-weight:normal;font-family:'Liberation Serif', serif;color:#000">Hoa</span></div>
<div class="t" style="left:257px;top:554px;width:81px;height:24px;overflow:hidden"><span class="t" style="left:3px;top:3.9px;font-size:18px;font-weight:normal;font-family:'Liberation Serif', serif;color:#000">Gái</span></div>
<div class="t" style="left:339px;top:554px;width:80px;height:24px;overflow:hidden"><span class="t" style="right:3px;top:3.9px;font-size:18px;letter-spacing:0.6px;margin-right:-0.6px;font-weight:normal;font-family:'Liberation Serif', serif;color:#000">25474</span></div>
<div class="t" style="left:420px;top:554px;width:80px;height:24px;overflow:hidden"><span class="t" style="left:3px;top:3.9px;font-size:18px;font-weight:normal;font-family:'Liberation Serif', serif;color:#000">C</span></div>
<div class="t" style="left:501px;top:554px;width:80px;height:24px;overflow:hidden"><span class="t" style="right:3px;top:3.9px;font-size:18px;letter-spacing:0.6px;margin-right:-0.6px;font-weight:normal;font-family:'Liberation Serif', serif;color:#000">5,00</span></div>
<div class="t" style="left:582px;top:554px;width:80px;height:24px;overflow:hidden"><span class="t" style="right:3px;top:3.9px;font-size:18px;letter-spacing:0.6px;margin-right:-0.6px;font-weight:normal;font-family:'Liberation Serif', serif;color:#000">6,00</span></div>
<div class="t" style="left:663px;top:554px;width:80px;height:24px;overflow:hidden"><span class="t" style="right:3px;top:3.9px;font-size:18px;letter-spacing:0.6px;margin-right:-0.6px;font-weight:normal;font-family:'Liberation Serif', serif;color:#000">5,67</span></div>
<svg style="left:21px;top:559.0px" width="15" height="14" viewBox="0 0 15 14"><rect x="2" y="2" width="10.5" height="10" fill="none" stroke="#000" stroke-width="2"/></svg>
<div class="b" style="left:13px;top:578px;width:731px;height:24px;background:#fff"></div>
<div class="b" style="left:94px;top:578px;width:650px;height:24px;background:#d9e1f2"></div>
<div class="t" style="left:95px;top:578px;width:80px;height:24px;overflow:hidden"><span class="t" style="left:3px;top:3.9px;font-size:18px;font-weight:normal;font-family:'Liberation Serif', serif;color:#000">Trần Quang</span></div>
<div class="t" style="left:176px;top:578px;width:80px;height:24px;overflow:hidden"><span class="t" style="left:3px;top:3.9px;font-size:18px;font-weight:normal;font-family:'Liberation Serif', serif;color:#000">Minh</span></div>
<div class="t" style="left:257px;top:578px;width:81px;height:24px;overflow:hidden"><span class="t" style="left:3px;top:3.9px;font-size:18px;font-weight:normal;font-family:'Liberation Serif', serif;color:#000">Trai</span></div>
<div class="t" style="left:339px;top:578px;width:80px;height:24px;overflow:hidden"><span class="t" style="right:3px;top:3.9px;font-size:18px;letter-spacing:0.6px;margin-right:-0.6px;font-weight:normal;font-family:'Liberation Serif', serif;color:#000">24911</span></div>
<div class="t" style="left:420px;top:578px;width:80px;height:24px;overflow:hidden"><span class="t" style="left:3px;top:3.9px;font-size:18px;font-weight:normal;font-family:'Liberation Serif', serif;color:#000">B</span></div>
<div class="t" style="left:501px;top:578px;width:80px;height:24px;overflow:hidden"><span class="t" style="right:3px;top:3.9px;font-size:18px;letter-spacing:0.6px;margin-right:-0.6px;font-weight:normal;font-family:'Liberation Serif', serif;color:#000">8,00</span></div>
<div class="t" style="left:582px;top:578px;width:80px;height:24px;overflow:hidden"><span class="t" style="right:3px;top:3.9px;font-size:18px;letter-spacing:0.6px;margin-right:-0.6px;font-weight:normal;font-family:'Liberation Serif', serif;color:#000">8,50</span></div>
<div class="t" style="left:663px;top:578px;width:80px;height:24px;overflow:hidden"><span class="t" style="right:3px;top:3.9px;font-size:18px;letter-spacing:0.6px;margin-right:-0.6px;font-weight:normal;font-family:'Liberation Serif', serif;color:#000">8,33</span></div>
<div class="b" style="left:13px;top:602px;width:731px;height:25px;background:#fff"></div>
<div class="t" style="left:95px;top:602px;width:80px;height:25px;overflow:hidden"><span class="t" style="left:3px;top:4.9px;font-size:18px;font-weight:normal;font-family:'Liberation Serif', serif;color:#000">Trần Văn</span></div>
<div class="t" style="left:176px;top:602px;width:80px;height:25px;overflow:hidden"><span class="t" style="left:3px;top:4.9px;font-size:18px;font-weight:normal;font-family:'Liberation Serif', serif;color:#000">Quân</span></div>
<div class="t" style="left:257px;top:602px;width:81px;height:25px;overflow:hidden"><span class="t" style="left:3px;top:4.9px;font-size:18px;font-weight:normal;font-family:'Liberation Serif', serif;color:#000">Trai</span></div>
<div class="t" style="left:339px;top:602px;width:80px;height:25px;overflow:hidden"><span class="t" style="right:3px;top:4.9px;font-size:18px;letter-spacing:0.6px;margin-right:-0.6px;font-weight:normal;font-family:'Liberation Serif', serif;color:#000">25522</span></div>
<div class="t" style="left:420px;top:602px;width:80px;height:25px;overflow:hidden"><span class="t" style="left:3px;top:4.9px;font-size:18px;font-weight:normal;font-family:'Liberation Serif', serif;color:#000">D</span></div>
<div class="t" style="left:501px;top:602px;width:80px;height:25px;overflow:hidden"><span class="t" style="right:3px;top:4.9px;font-size:18px;letter-spacing:0.6px;margin-right:-0.6px;font-weight:normal;font-family:'Liberation Serif', serif;color:#000">7,50</span></div>
<div class="t" style="left:582px;top:602px;width:80px;height:25px;overflow:hidden"><span class="t" style="right:3px;top:4.9px;font-size:18px;letter-spacing:0.6px;margin-right:-0.6px;font-weight:normal;font-family:'Liberation Serif', serif;color:#000">8,00</span></div>
<div class="t" style="left:663px;top:602px;width:80px;height:25px;overflow:hidden"><span class="t" style="right:3px;top:4.9px;font-size:18px;letter-spacing:0.6px;margin-right:-0.6px;font-weight:normal;font-family:'Liberation Serif', serif;color:#000">7,83</span></div>
<svg style="left:21px;top:607.5px" width="15" height="14" viewBox="0 0 15 14"><rect x="2" y="2" width="10.5" height="10" fill="none" stroke="#000" stroke-width="2"/></svg>
<div class="b" style="left:13px;top:627px;width:731px;height:24px;background:#fff"></div>
<div class="b" style="left:94px;top:627px;width:650px;height:24px;background:#d9e1f2"></div>
<div class="t" style="left:95px;top:627px;width:80px;height:24px;overflow:hidden"><span class="t" style="left:3px;top:3.9px;font-size:18px;font-weight:normal;font-family:'Liberation Serif', serif;color:#000">Lâm Tuấn</span></div>
<div class="t" style="left:176px;top:627px;width:80px;height:24px;overflow:hidden"><span class="t" style="left:3px;top:3.9px;font-size:18px;font-weight:normal;font-family:'Liberation Serif', serif;color:#000">Duy</span></div>
<div class="t" style="left:257px;top:627px;width:81px;height:24px;overflow:hidden"><span class="t" style="left:3px;top:3.9px;font-size:18px;font-weight:normal;font-family:'Liberation Serif', serif;color:#000">Trai</span></div>
<div class="t" style="left:339px;top:627px;width:80px;height:24px;overflow:hidden"><span class="t" style="right:3px;top:3.9px;font-size:18px;letter-spacing:0.6px;margin-right:-0.6px;font-weight:normal;font-family:'Liberation Serif', serif;color:#000">25562</span></div>
<div class="t" style="left:420px;top:627px;width:80px;height:24px;overflow:hidden"><span class="t" style="left:3px;top:3.9px;font-size:18px;font-weight:normal;font-family:'Liberation Serif', serif;color:#000">B</span></div>
<div class="t" style="left:501px;top:627px;width:80px;height:24px;overflow:hidden"><span class="t" style="right:3px;top:3.9px;font-size:18px;letter-spacing:0.6px;margin-right:-0.6px;font-weight:normal;font-family:'Liberation Serif', serif;color:#000">8,00</span></div>
<div class="t" style="left:582px;top:627px;width:80px;height:24px;overflow:hidden"><span class="t" style="right:3px;top:3.9px;font-size:18px;letter-spacing:0.6px;margin-right:-0.6px;font-weight:normal;font-family:'Liberation Serif', serif;color:#000">8,00</span></div>
<div class="t" style="left:663px;top:627px;width:80px;height:24px;overflow:hidden"><span class="t" style="right:3px;top:3.9px;font-size:18px;letter-spacing:0.6px;margin-right:-0.6px;font-weight:normal;font-family:'Liberation Serif', serif;color:#000">7,67</span></div>
<div class="b" style="left:13px;top:651px;width:731px;height:24px;background:#8eaadb"></div>
<div class="t" style="left:95px;top:651px;width:80px;height:24px;overflow:hidden"><span class="t" style="left:3px;top:3.9px;font-size:18px;font-weight:bold;font-family:'Liberation Serif', serif;color:#000">Ngô Vĩnh</span></div>
<div class="t" style="left:176px;top:651px;width:80px;height:24px;overflow:hidden"><span class="t" style="left:3px;top:3.9px;font-size:18px;font-weight:bold;font-family:'Liberation Serif', serif;color:#000">Duy</span></div>
<div class="t" style="left:257px;top:651px;width:81px;height:24px;overflow:hidden"><span class="t" style="left:3px;top:3.9px;font-size:18px;font-weight:bold;font-family:'Liberation Serif', serif;color:#000">Gái</span></div>
<div class="t" style="left:339px;top:651px;width:80px;height:24px;overflow:hidden"><span class="t" style="right:3px;top:3.9px;font-size:18px;letter-spacing:0.6px;margin-right:-0.6px;font-weight:bold;font-family:'Liberation Serif', serif;color:#000">24806</span></div>
<div class="t" style="left:420px;top:651px;width:80px;height:24px;overflow:hidden"><span class="t" style="left:3px;top:3.9px;font-size:18px;font-weight:bold;font-family:'Liberation Serif', serif;color:#000">C</span></div>
<div class="t" style="left:501px;top:651px;width:80px;height:24px;overflow:hidden"><span class="t" style="right:3px;top:3.9px;font-size:18px;letter-spacing:0.6px;margin-right:-0.6px;font-weight:bold;font-family:'Liberation Serif', serif;color:#000">8,00</span></div>
<div class="t" style="left:582px;top:651px;width:80px;height:24px;overflow:hidden"><span class="t" style="right:3px;top:3.9px;font-size:18px;letter-spacing:0.6px;margin-right:-0.6px;font-weight:bold;font-family:'Liberation Serif', serif;color:#000">9,50</span></div>
<div class="t" style="left:663px;top:651px;width:80px;height:24px;overflow:hidden"><span class="t" style="right:3px;top:3.9px;font-size:18px;letter-spacing:0.6px;margin-right:-0.6px;font-weight:bold;font-family:'Liberation Serif', serif;color:#000">9,00</span></div>
<svg style="left:22px;top:655.5px" width="17" height="15" viewBox="0 0 17 15"><rect x="2" y="2.5" width="11.5" height="11" fill="none" stroke="#000" stroke-width="2.2"/><path d="M3.5 8 L6.5 11.5 L15.5 1" stroke="#000" stroke-width="2.4" fill="none"/></svg>
<div class="b" style="left:13px;top:675px;width:731px;height:25px;background:#fff"></div>
<div class="b" style="left:94px;top:675px;width:650px;height:25px;background:#d9e1f2"></div>
<div class="t" style="left:95px;top:675px;width:80px;height:25px;overflow:hidden"><span class="t" style="left:3px;top:4.9px;font-size:18px;font-weight:normal;font-family:'Liberation Serif', serif;color:#000">Quách Thị</span></div>
<div class="t" style="left:176px;top:675px;width:80px;height:25px;overflow:hidden"><span class="t" style="left:3px;top:4.9px;font-size:18px;font-weight:normal;font-family:'Liberation Serif', serif;color:#000">Thu</span></div>
<div class="t" style="left:257px;top:675px;width:81px;height:25px;overflow:hidden"><span class="t" style="left:3px;top:4.9px;font-size:18px;font-weight:normal;font-family:'Liberation Serif', serif;color:#000">Gái</span></div>
<div class="t" style="left:339px;top:675px;width:80px;height:25px;overflow:hidden"><span class="t" style="right:3px;top:4.9px;font-size:18px;letter-spacing:0.6px;margin-right:-0.6px;font-weight:normal;font-family:'Liberation Serif', serif;color:#000">25404</span></div>
<div class="t" style="left:420px;top:675px;width:80px;height:25px;overflow:hidden"><span class="t" style="left:3px;top:4.9px;font-size:18px;font-weight:normal;font-family:'Liberation Serif', serif;color:#000">C</span></div>
<div class="t" style="left:501px;top:675px;width:80px;height:25px;overflow:hidden"><span class="t" style="right:3px;top:4.9px;font-size:18px;letter-spacing:0.6px;margin-right:-0.6px;font-weight:normal;font-family:'Liberation Serif', serif;color:#000">6,50</span></div>
<div class="t" style="left:582px;top:675px;width:80px;height:25px;overflow:hidden"><span class="t" style="right:3px;top:4.9px;font-size:18px;letter-spacing:0.6px;margin-right:-0.6px;font-weight:normal;font-family:'Liberation Serif', serif;color:#000">8,00</span></div>
<div class="t" style="left:663px;top:675px;width:80px;height:25px;overflow:hidden"><span class="t" style="right:3px;top:4.9px;font-size:18px;letter-spacing:0.6px;margin-right:-0.6px;font-weight:normal;font-family:'Liberation Serif', serif;color:#000">7,50</span></div>
<div class="b" style="left:13px;top:700px;width:731px;height:24px;background:#8eaadb"></div>
<div class="t" style="left:95px;top:700px;width:80px;height:24px;overflow:hidden"><span class="t" style="left:3px;top:3.9px;font-size:18px;font-weight:bold;font-family:'Liberation Serif', serif;color:#000">Tần Nam</span></div>
<div class="t" style="left:176px;top:700px;width:80px;height:24px;overflow:hidden"><span class="t" style="left:3px;top:3.9px;font-size:18px;font-weight:bold;font-family:'Liberation Serif', serif;color:#000">Nam</span></div>
<div class="t" style="left:257px;top:700px;width:81px;height:24px;overflow:hidden"><span class="t" style="left:3px;top:3.9px;font-size:18px;font-weight:bold;font-family:'Liberation Serif', serif;color:#000">Trai</span></div>
<div class="t" style="left:339px;top:700px;width:80px;height:24px;overflow:hidden"><span class="t" style="right:3px;top:3.9px;font-size:18px;letter-spacing:0.6px;margin-right:-0.6px;font-weight:bold;font-family:'Liberation Serif', serif;color:#000">25409</span></div>
<div class="t" style="left:420px;top:700px;width:80px;height:24px;overflow:hidden"><span class="t" style="left:3px;top:3.9px;font-size:18px;font-weight:bold;font-family:'Liberation Serif', serif;color:#000">A</span></div>
<div class="t" style="left:501px;top:700px;width:80px;height:24px;overflow:hidden"><span class="t" style="right:3px;top:3.9px;font-size:18px;letter-spacing:0.6px;margin-right:-0.6px;font-weight:bold;font-family:'Liberation Serif', serif;color:#000">10,00</span></div>
<div class="t" style="left:582px;top:700px;width:80px;height:24px;overflow:hidden"><span class="t" style="right:3px;top:3.9px;font-size:18px;letter-spacing:0.6px;margin-right:-0.6px;font-weight:bold;font-family:'Liberation Serif', serif;color:#000">10,00</span></div>
<div class="t" style="left:663px;top:700px;width:80px;height:24px;overflow:hidden"><span class="t" style="right:3px;top:3.9px;font-size:18px;letter-spacing:0.6px;margin-right:-0.6px;font-weight:bold;font-family:'Liberation Serif', serif;color:#000">10,00</span></div>
<svg style="left:22px;top:704.5px" width="17" height="15" viewBox="0 0 17 15"><rect x="2" y="2.5" width="11.5" height="11" fill="none" stroke="#000" stroke-width="2.2"/><path d="M3.5 8 L6.5 11.5 L15.5 1" stroke="#000" stroke-width="2.4" fill="none"/></svg>
<div class="b" style="left:13px;top:335px;width:731px;height:1px;background:#000"></div>
<div class="b" style="left:13px;top:359px;width:731px;height:1px;background:#000"></div>
<div class="b" style="left:13px;top:384px;width:731px;height:1px;background:#000"></div>
<div class="b" style="left:13px;top:408px;width:731px;height:1px;background:#000"></div>
<div class="b" style="left:13px;top:432px;width:731px;height:1px;background:#000"></div>
<div class="b" style="left:13px;top:456px;width:731px;height:1px;background:#000"></div>
<div class="b" style="left:13px;top:481px;width:731px;height:1px;background:#000"></div>
<div class="b" style="left:13px;top:505px;width:731px;height:1px;background:#000"></div>
<div class="b" style="left:13px;top:529px;width:731px;height:1px;background:#000"></div>
<div class="b" style="left:13px;top:554px;width:731px;height:1px;background:#000"></div>
<div class="b" style="left:13px;top:578px;width:731px;height:1px;background:#000"></div>
<div class="b" style="left:13px;top:602px;width:731px;height:1px;background:#000"></div>
<div class="b" style="left:13px;top:627px;width:731px;height:1px;background:#000"></div>
<div class="b" style="left:13px;top:651px;width:731px;height:1px;background:#000"></div>
<div class="b" style="left:13px;top:675px;width:731px;height:1px;background:#000"></div>
<div class="b" style="left:13px;top:700px;width:731px;height:1px;background:#000"></div>
<div class="b" style="left:13px;top:724px;width:731px;height:1px;background:#000"></div>
<div class="b" style="left:13px;top:261px;width:731px;height:1px;background:#000"></div>
<div class="b" style="left:13px;top:261px;width:1px;height:464px;background:#000"></div>
<div class="b" style="left:94px;top:261px;width:1px;height:464px;background:#000"></div>
<div class="b" style="left:175px;top:261px;width:1px;height:464px;background:#000"></div>
<div class="b" style="left:256px;top:261px;width:1px;height:464px;background:#000"></div>
<div class="b" style="left:338px;top:261px;width:1px;height:464px;background:#000"></div>
<div class="b" style="left:419px;top:261px;width:1px;height:464px;background:#000"></div>
<div class="b" style="left:500px;top:261px;width:1px;height:464px;background:#000"></div>
<div class="b" style="left:581px;top:261px;width:1px;height:464px;background:#000"></div>
<div class="b" style="left:662px;top:261px;width:1px;height:464px;background:#000"></div>
<div class="b" style="left:743px;top:335px;width:1px;height:390px;background:#000"></div>
<div class="t" style="left:95px;top:262px;width:80px;height:73px;overflow:hidden"><span class="t" style="left:4px;top:52.7px;font-size:18px;font-weight:bold;font-family:'Liberation Serif', serif;color:#fff">Họ</span></div>
<div class="t" style="left:176px;top:262px;width:80px;height:73px;overflow:hidden"><span class="t" style="left:4px;top:52.7px;font-size:18px;font-weight:bold;font-family:'Liberation Serif', serif;color:#fff">Tên</span></div>
<div class="t" style="left:257px;top:262px;width:81px;height:73px;overflow:hidden"><span class="t" style="left:4px;top:52.7px;font-size:18px;font-weight:bold;font-family:'Liberation Serif', serif;color:#fff">Giới tính</span></div>
<div class="t" style="left:339px;top:262px;width:80px;height:73px;overflow:hidden"><span class="t" style="left:4px;top:52.7px;font-size:18px;font-weight:bold;font-family:'Liberation Serif', serif;color:#fff">Ngày Sinh</span></div>
<div class="t" style="left:420px;top:262px;width:80px;height:73px;overflow:hidden"><span class="t" style="left:4px;top:52.7px;font-size:18px;font-weight:bold;font-family:'Liberation Serif', serif;color:#fff">Lớp</span></div>
<div class="t" style="left:501px;top:262px;width:80px;height:73px;overflow:hidden"><span class="t" style="left:4px;top:52.7px;font-size:18px;font-weight:bold;font-family:'Liberation Serif', serif;color:#fff">Lý Thuyết</span></div>
<div class="t" style="left:582px;top:262px;width:80px;height:73px;overflow:hidden"><span class="t" style="left:4px;top:52.7px;font-size:18px;font-weight:bold;font-family:'Liberation Serif', serif;color:#fff">Thực Hành</span></div>
<div class="t" style="left:663px;top:262px;width:80px;height:73px;overflow:hidden"><span class="t" style="left:4px;top:52.7px;font-size:18px;font-weight:bold;font-family:'Liberation Serif', serif;color:#fff">Tổng điểm</span></div>
<div class="b" style="left:9px;top:264px;width:4px;height:70px;background:linear-gradient(90deg,#a9a9a9,#b9b9b9 60%,#d4d4d4)"></div>
<div class="t" style="left:36.0px;top:280.0px;font-size:16px;color:#1e2a2a;font-weight:normal;font-family:'Liberation Sans', sans-serif;">Chọn</div>
<div class="b" style="left:26px;top:302px;width:18px;height:18px;background:#fff;border:1.5px solid #333"></div>
<div class="t" style="left:58.5px;top:303.5px;font-size:16px;color:#1e2a2a;font-weight:normal;font-family:'Liberation Sans', sans-serif;">all</div>
<div class="b" style="left:422px;top:133px;width:149px;height:156px;background:#fff;border:1px solid #c6c6c6;box-shadow:1px 1px 2px rgba(0,0,0,0.15)"></div>
<div class="b" style="left:423px;top:133px;width:147px;height:28px;background:#eeeeee"></div>
<div class="b" style="left:423px;top:210px;width:147px;height:28px;background:#eeeeee"></div>
<div class="t" style="left:434.0px;top:139.2px;font-size:14.5px;color:#6a6a6a;font-weight:bold;font-family:'Liberation Sans', sans-serif;">Form Controls</div>
<div class="t" style="left:434.0px;top:217.9px;font-size:14.6px;color:#6a6a6a;font-weight:bold;font-family:'Liberation Sans', sans-serif;">ActiveX Controls</div>
<svg style="left:0;top:0" width="750" height="729"><rect x="425.6" y="167.6" width="17.8" height="10.8" fill="#fff" stroke="#6f6f6f" stroke-width="1.4"/><rect x="450.9" y="165.0" width="16.5" height="16" fill="#fff" stroke="#6f6f6f" stroke-width="1.2"/><rect x="451.4" y="165.5" width="15.5" height="2" fill="#6f6f6f"/><path d="M462.4 165.5V180.5" stroke="#6f6f6f"/><path d="M452.9 169.5H460.4" stroke="#9a9a9a" stroke-width="0.9"/><path d="M452.9 172.1H460.4" stroke="#9a9a9a" stroke-width="0.9"/><path d="M452.9 174.7H460.4" stroke="#9a9a9a" stroke-width="0.9"/><path d="M452.9 177.3H460.4" stroke="#9a9a9a" stroke-width="0.9"/><path d="M463.4 170.5L464.9 169.0L466.4 170.5M463.4 176.5L464.9 178.0L466.4 176.5" stroke="#6f6f6f" stroke-width="0.9" fill="none"/><rect x="467.5" y="156.3" width="33.5" height="33.2" fill="#dadada"/><rect x="470.5" y="160" width="26" height="25.5" fill="#c9c9c9"/><rect x="474.2" y="163.8" width="17.8" height="17.8" fill="#fff" stroke="#6f6f6f" stroke-width="1.4"/><path d="M477.5 174 L480.7 177 L488 169.5" stroke="#3c7ac2" stroke-width="2.1" fill="none"/><rect x="499.5" y="165.5" width="15.7" height="14.3" fill="#fff" stroke="#6f6f6f" stroke-width="1.2"/><path d="M501 172.65H513.7" stroke="#6f6f6f" stroke-width="1"/><path d="M507.35 168L503.35 170.65H511.35ZM507.35 177.3L503.35 174.65H511.35Z" fill="#6f6f6f"/><rect x="523.9" y="166.0" width="17" height="13.5" fill="#fff" stroke="#6f6f6f" stroke-width="1.2"/><path d="M525.9 169.0H531.4" stroke="#8a8a8a" stroke-width="1"/><path d="M525.9 172.0H531.4" stroke="#8a8a8a" stroke-width="1"/><path d="M525.9 175.0H531.4" stroke="#8a8a8a" stroke-width="1"/><rect x="533.4" y="166.0" width="7.5" height="13.5" fill="#fff" stroke="#3c7ac2" stroke-width="1.2"/><path d="M537.1999999999999 168.5L535.1999999999999 171.0H539.1999999999999ZM537.1999999999999 177.0L535.1999999999999 174.5H539.1999999999999Z" fill="#444"/><path d="M533.4 172.75H540.4" stroke="#3c7ac2" stroke-width="0.8"/><path d="M426.5 192V207.2H443.5V192M426.5 192H428.5M442 192H443.5" stroke="#6f6f6f" stroke-width="1.3" fill="none"/><text x="428.6" y="194.3" font-size="7.5" font-family="Liberation Sans" font-weight="bold" fill="#444">XYZ</text><text x="450" y="203.6" font-size="15" font-family="Liberation Sans" font-style="italic" fill="#555">A</text><text x="460" y="203.6" font-size="11.5" font-family="Liberation Sans" font-style="italic" fill="#555">a</text><rect x="479.3" y="188.6" width="8" height="18.6" fill="#fff" stroke="#6f6f6f"/><path d="M479.3 192.5h8M479.3 202.5h8" stroke="#6f6f6f" stroke-width="0.9"/><path d="M481 204L483.3 205.8L485.6 204Z" fill="#6f6f6f"/><rect x="498.5" y="192" width="17" height="13.5" fill="#fff" stroke="#c6c6c6" stroke-width="1.2"/><text x="500" y="203" font-size="11.5" font-family="Liberation Sans" fill="#b5b5b5">ab</text><path d="M513 194V204" stroke="#b5b5b5" stroke-width="1.3"/><rect x="523.5" y="191" width="18" height="15" fill="#fff" stroke="#c6c6c6"/><path d="M525.5 195h8M525.5 199h8M525.5 203h8" stroke="#c6c6c6"/><rect x="425.6" y="245.6" width="17.8" height="10.8" fill="#fff" stroke="#6f6f6f" stroke-width="1.4"/><rect x="450.9" y="243.0" width="16.5" height="16.5" fill="#fff" stroke="#6f6f6f" stroke-width="1.2"/><rect x="451.4" y="243.5" width="15.5" height="2" fill="#6f6f6f"/><path d="M462.4 243.5V259.0" stroke="#6f6f6f"/><path d="M452.9 247.5H460.4" stroke="#9a9a9a" stroke-width="0.9"/><path d="M452.9 250.1H460.4" stroke="#9a9a9a" stroke-width="0.9"/><path d="M452.9 252.7H460.4" stroke="#9a9a9a" stroke-width="0.9"/><path d="M452.9 255.3H460.4" stroke="#9a9a9a" stroke-width="0.9"/><path d="M463.4 248.5L464.9 247.0L466.4 248.5M463.4 255.0L464.9 256.5L466.4 255.0" stroke="#6f6f6f" stroke-width="0.9" fill="none"/><rect x="474.6" y="242.7" width="16.8" height="16.6" fill="#fff" stroke="#6f6f6f" stroke-width="1.4"/><path d="M477.8 252 L481 255.2 L488.2 247.5" stroke="#3c7ac2" stroke-width="2.1" fill="none"/><rect x="499.2" y="244.3" width="17.3" height="12.7" fill="#fff" stroke="#6f6f6f" stroke-width="1.2"/><path d="M501.2 247.3H507.0" stroke="#8a8a8a" stroke-width="1"/><path d="M501.2 250.3H507.0" stroke="#8a8a8a" stroke-width="1"/><path d="M501.2 253.3H507.0" stroke="#8a8a8a" stroke-width="1"/><rect x="509.0" y="244.3" width="7.5" height="12.7" fill="#fff" stroke="#3c7ac2" stroke-width="1.2"/><path d="M512.8 246.8L510.8 249.3H514.8ZM512.8 254.5L510.8 252.0H514.8Z" fill="#444"/><path d="M509.0 250.65H516.0" stroke="#3c7ac2" stroke-width="0.8"/><rect x="522.6" y="243.8" width="19" height="14" fill="#fff" stroke="#6f6f6f" stroke-width="1.2"/><text x="524" y="255.5" font-size="12" font-family="Liberation Sans" fill="#333">ab</text><path d="M538.5 245.5V256.5" stroke="#222" stroke-width="1.5"/><rect x="551" y="242.3" width="9.4" height="8" fill="#fff" stroke="#6f6f6f"/><rect x="551" y="251.6" width="9.4" height="8" fill="#fff" stroke="#6f6f6f"/><path d="M553.2 248L555.7 245L558.2 248ZM553.2 253.8L555.7 256.8L558.2 253.8Z" fill="#444"/><rect x="426.2" y="266.9" width="16" height="16.3" fill="#fff" stroke="#6f6f6f" stroke-width="1.2"/><path d="M427.7 275.04999999999995H440.7" stroke="#6f6f6f" stroke-width="1"/><path d="M434.2 269.4L430.2 273.04999999999995H438.2ZM434.2 280.7L430.2 277.04999999999995H438.2Z" fill="#6f6f6f"/><circle cx="459" cy="275.5" r="6.8" fill="#fff" stroke="#6f6f6f" stroke-width="1.3"/><circle cx="459" cy="275.5" r="3.4" fill="#6f6f6f"/><text x="476.8" y="279.8" font-size="18" font-family="Liberation Sans" font-weight="bold" fill="#444">A</text><path d="M499.5 266.5H515V275M506.5 283.5H499.5V266.5" fill="#fff" stroke="#6f6f6f" stroke-width="1.1"/><rect x="500" y="267" width="14.5" height="16" fill="#fff"/><path d="M499.5 266.5H515V275M506.5 283.5H499.5V266.5" fill="none" stroke="#6f6f6f" stroke-width="1.1"/><circle cx="510.5" cy="270" r="1.4" fill="#e8823a"/><path d="M500.5 283V278L503.5 275L506.5 278V283Z" fill="#a9c4e4"/><rect x="507.8" y="275.8" width="10.2" height="6.6" fill="#fff" stroke="#3c7ac2" stroke-width="1.4"/><path d="M512.9 282.4V285M509.5 285.2H516.3" stroke="#3c7ac2" stroke-width="1.3"/><rect x="525.5" y="266.5" width="13.2" height="7" fill="#a3a3a3" stroke="#eee"/><rect x="525.5" y="276" width="13.2" height="7" fill="#a3a3a3" stroke="#eee"/><rect x="525" y="266" width="14.2" height="8" fill="none" stroke="#8a8a8a" stroke-width="0.6"/><rect x="525" y="275.5" width="14.2" height="8" fill="none" stroke="#8a8a8a" stroke-width="0.6"/><path d="M550 266.5V272M548.6 272H551.4V279.5H548.6Z" stroke="#555" stroke-width="1.6" fill="#555"/><path d="M550 279.5V284.5" stroke="#555" stroke-width="2.6"/><path d="M556.5 266.5 Q554.5 270 557.5 272.5 H559.5 Q562.5 270 560.5 266.5" stroke="#555" stroke-width="2" fill="none"/><path d="M558.5 272.5V285" stroke="#555" stroke-width="2.6"/><path d="M561.5 284.6H566" stroke="#555" stroke-width="0.9"/></svg>
<div class="b" style="left:493px;top:-1px;width:112px;height:41px;border:3px solid #fe0000;box-shadow:1px 1px 2px rgba(0,0,0,0.35), inset 1px 1px 2px rgba(0,0,0,0.25)"></div>
<div class="b" style="left:415px;top:40px;width:63.5px;height:93px;border:3px solid #fe0000;box-shadow:1px 1px 2px rgba(0,0,0,0.35), inset 1px 1px 2px rgba(0,0,0,0.25)"></div>
<div class="b" style="left:464px;top:152.8px;width:40px;height:40.19999999999999px;border:3.4px solid #fe0000;box-shadow:1px 1px 2px rgba(0,0,0,0.35), inset 1px 1px 2px rgba(0,0,0,0.25)"></div>
<div class="b" style="left:6px;top:261px;width:93px;height:76px;border:3px solid #fe0000;box-shadow:1px 1px 2px rgba(0,0,0,0.35), inset 1px 1px 2px rgba(0,0,0,0.25)"></div>
<svg style="left:0;top:0" width="750" height="729"><defs><filter id="sh" x="-20%" y="-20%" width="140%" height="140%"><feGaussianBlur in="SourceAlpha" stdDeviation="2"/><feOffset dx="1.5" dy="2.5" result="o"/><feComponentTransfer><feFuncA type="linear" slope="0.42"/></feComponentTransfer><feMerge><feMergeNode/><feMergeNode in="SourceGraphic"/></feMerge></filter></defs><polygon points="577.8,31.0 599.6,42.2 595.0,44.3 654.9,120.0 654.4,121.3 653.1,121.6 588.0,49.6 585.6,53.0" fill="#fe0000" stroke="#fff" stroke-width="1.6" stroke-linejoin="miter" filter="url(#sh)"/><polygon points="461.0,103.4 485.9,100.4 483.9,105.3 610.6,143.8 610.9,145.2 610.0,146.2 481.7,113.7 481.2,118.9" fill="#fe0000" stroke="#fff" stroke-width="1.6" stroke-linejoin="miter" filter="url(#sh)"/><polygon points="504.0,183.5 529.0,182.5 526.5,186.8 587.6,211.7 587.8,213.0 586.8,213.9 522.8,195.2 522.9,200.6" fill="#fe0000" stroke="#fff" stroke-width="1.6" stroke-linejoin="miter" filter="url(#sh)"/><polygon points="47.7,302.7 58.6,281.4 60.5,285.7 139.2,221.5 140.5,222.0 140.8,223.3 67.0,292.4 72.0,295.3" fill="#fe0000" stroke="#fff" stroke-width="1.6" stroke-linejoin="miter" filter="url(#sh)"/><g filter="url(#sh)"><circle cx="661" cy="75" r="25" fill="#fff"/></g><circle cx="661" cy="75" r="20.8" fill="#0000f0"/><path transform="translate(654.8,64.9)" d="M4.2 0 H9.3 V16.3 H13.3 V20.1 H0 V16.3 H4.2 V6.1 H0 V3.3 C2.3 3.1 3.8 2 4.2 0 Z" fill="#fff" fill-rule="evenodd"/><g filter="url(#sh)"><circle cx="557" cy="98" r="25" fill="#fff"/></g><circle cx="557" cy="98" r="20.8" fill="#0000f0"/><path transform="translate(549.8,87.8)" d="M0.4 1.4 C2.2 0.5 4.5 0 7.3 0 C12.2 0 15 2.3 15 6.4 C15 9.6 12.8 12 7.8 16.3 H15.2 V20.1 H0 V16.6 C7.5 10.5 9.9 8.7 9.9 6.6 C9.9 4.6 8.8 3.8 6.8 3.8 C4.6 3.8 2.5 4.7 0.4 6.2 Z" fill="#fff" fill-rule="evenodd"/><g filter="url(#sh)"><circle cx="568" cy="176" r="25" fill="#fff"/></g><circle cx="568" cy="176" r="20.8" fill="#0000f0"/><path transform="translate(560,165.9)" d="M0.8 1.1 C2.8 0.4 5 0 7.6 0 C12.4 0 15 2 15 5.2 C15 7.4 13.6 8.9 11.6 9.6 C14.2 10.3 16 12 16 14.5 C16 18 13 19.8 7.8 19.8 C4.8 19.8 2.2 19.2 0 18.3 V14 C2.2 15.3 4.6 16 7 16 C9.6 16 11 15.2 11 13.6 C11 12 9.6 11.3 7 11.3 H4.8 V7.9 H6.8 C9 7.9 10.2 7.2 10.2 5.8 C10.2 4.4 9 3.7 6.8 3.7 C4.8 3.7 2.8 4.3 0.8 5.5 Z" fill="#fff" fill-rule="evenodd"/><g filter="url(#sh)"><circle cx="136" cy="261" r="25" fill="#fff"/></g><circle cx="136" cy="261" r="20.8" fill="#0000f0"/><path transform="translate(127,250.9)" d="M9 0 H14.2 V10.5 H17 V15.1 H14.2 V20 H9 V15.1 H0 V10.7 Z M9 5.4 L4.6 10.5 H9 Z" fill="#fff" fill-rule="evenodd"/></svg>
</body></html>
